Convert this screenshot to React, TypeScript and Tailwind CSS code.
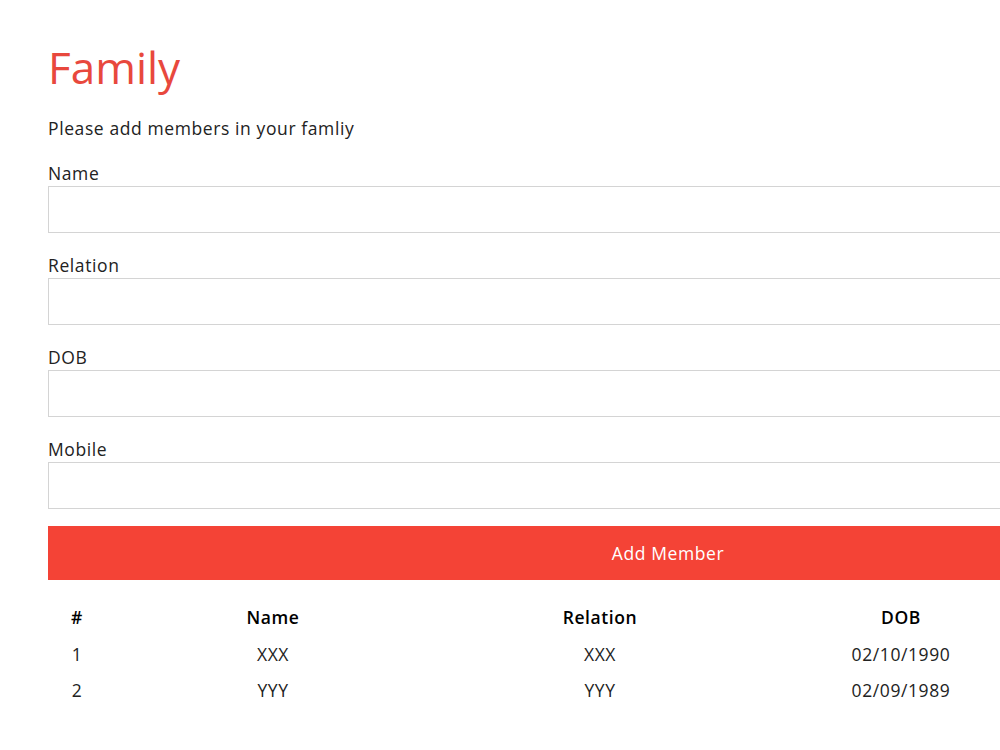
const fields = ["Name", "Relation", "DOB", "Mobile"];

const members = [
  { id: 1, name: "XXX", relation: "XXX", dob: "02/10/1990" },
  { id: 2, name: "YYY", relation: "YYY", dob: "02/09/1989" },
];

const cols = "grid grid-cols-[58px_334px_320px_282px]";

export default function App() {
  return (
    <div className="min-h-screen bg-white overflow-hidden font-['Open_Sans',sans-serif] text-[#222] text-[17.5px] tracking-[0.6px]">
      <div className="w-[1240px] ml-12 pt-[38px]">
        <h1 className="text-[44px] leading-[58px] font-medium text-[#e8483d] tracking-[0px]">Family</h1>
        <p className="mt-[19px] leading-[26px]">Please add members in your famliy</p>

        <form className="mt-[19px] flex flex-col gap-[19px]" onSubmit={(e) => e.preventDefault()}>
          {fields.map((f) => (
            <label key={f} className="flex flex-col">
              <span className="leading-[26px]">{f}</span>
              <input className="h-[47px] border border-[#d4d4d4] bg-white px-3 outline-none" />
            </label>
          ))}
          <button
            type="submit"
            className="h-[54px] bg-[#f44336] text-white font-medium -mt-[2px]"
          >
            Add Member
          </button>
        </form>

        <div className="mt-[19px]">
          <div className={`${cols} h-[37px] items-center text-center font-semibold text-black`}>
            <div>#</div>
            <div>Name</div>
            <div>Relation</div>
            <div>DOB</div>
          </div>
          {members.map((m) => (
            <div key={m.id} className={`${cols} h-[36px] items-center text-center`}>
              <div>{m.id}</div>
              <div>{m.name}</div>
              <div>{m.relation}</div>
              <div>{m.dob}</div>
            </div>
          ))}
        </div>
      </div>
    </div>
  );
}
